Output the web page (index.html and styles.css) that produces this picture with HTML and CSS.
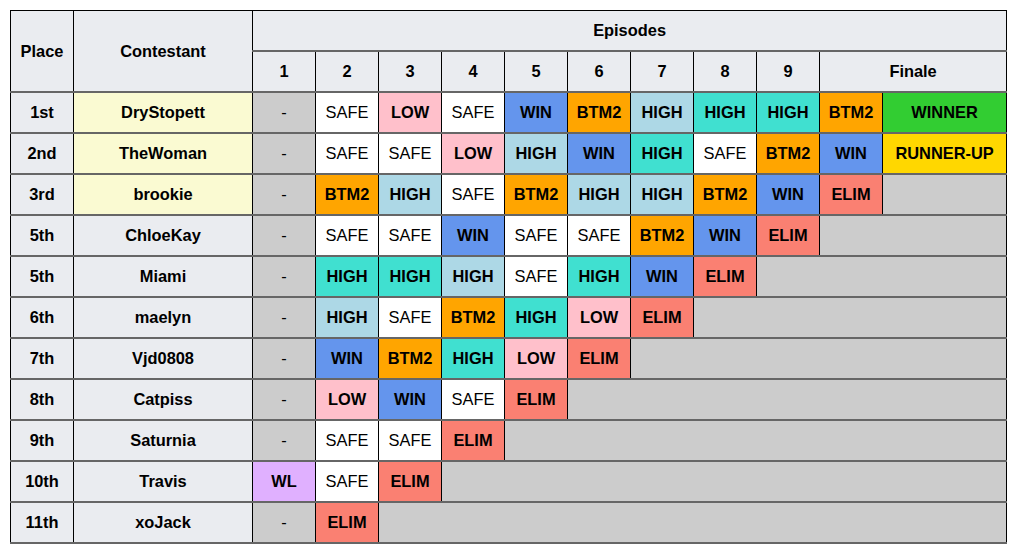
FILE: index.html
```html
<!DOCTYPE html>
<html>
<head>
<meta charset="utf-8">
<link rel="stylesheet" href="styles.css">
</head>
<body>
<table class="results">
  <colgroup>
    <col class="c-place"><col class="c-name">
    <col class="c-ep"><col class="c-ep"><col class="c-ep"><col class="c-ep"><col class="c-ep">
    <col class="c-ep"><col class="c-ep"><col class="c-ep"><col class="c-ep"><col class="c-ep">
    <col class="c-fin">
  </colgroup>
  <thead>
    <tr>
      <th rowspan="2">Place</th>
      <th rowspan="2">Contestant</th>
      <th colspan="11">Episodes</th>
    </tr>
    <tr>
      <th>1</th><th>2</th><th>3</th><th>4</th><th>5</th><th>6</th><th>7</th><th>8</th><th>9</th>
      <th colspan="2">Finale</th>
    </tr>
  </thead>
  <tbody>
    <tr>
      <th>1st</th><th class="top">DryStopett</th>
      <td class="na">-</td><td class="safe">SAFE</td><td class="low">LOW</td><td class="safe">SAFE</td><td class="win">WIN</td><td class="btm">BTM2</td><td class="high">HIGH</td><td class="high2">HIGH</td><td class="high2">HIGH</td><td class="btm">BTM2</td><td class="winner">WINNER</td>
    </tr>
    <tr>
      <th>2nd</th><th class="top">TheWoman</th>
      <td class="na">-</td><td class="safe">SAFE</td><td class="safe">SAFE</td><td class="low">LOW</td><td class="high">HIGH</td><td class="win">WIN</td><td class="high2">HIGH</td><td class="safe">SAFE</td><td class="btm">BTM2</td><td class="win">WIN</td><td class="runner">RUNNER-UP</td>
    </tr>
    <tr>
      <th>3rd</th><th class="top">brookie</th>
      <td class="na">-</td><td class="btm">BTM2</td><td class="high">HIGH</td><td class="safe">SAFE</td><td class="btm">BTM2</td><td class="high">HIGH</td><td class="high">HIGH</td><td class="btm">BTM2</td><td class="win">WIN</td><td class="elim">ELIM</td><td class="out"></td>
    </tr>
    <tr>
      <th>5th</th><th>ChloeKay</th>
      <td class="na">-</td><td class="safe">SAFE</td><td class="safe">SAFE</td><td class="win">WIN</td><td class="safe">SAFE</td><td class="safe">SAFE</td><td class="btm">BTM2</td><td class="win">WIN</td><td class="elim">ELIM</td><td class="out" colspan="2"></td>
    </tr>
    <tr>
      <th>5th</th><th>Miami</th>
      <td class="na">-</td><td class="high2">HIGH</td><td class="high2">HIGH</td><td class="high">HIGH</td><td class="safe">SAFE</td><td class="high2">HIGH</td><td class="win">WIN</td><td class="elim">ELIM</td><td class="out" colspan="3"></td>
    </tr>
    <tr>
      <th>6th</th><th>maelyn</th>
      <td class="na">-</td><td class="high">HIGH</td><td class="safe">SAFE</td><td class="btm">BTM2</td><td class="high2">HIGH</td><td class="low">LOW</td><td class="elim">ELIM</td><td class="out" colspan="4"></td>
    </tr>
    <tr>
      <th>7th</th><th>Vjd0808</th>
      <td class="na">-</td><td class="win">WIN</td><td class="btm">BTM2</td><td class="high2">HIGH</td><td class="low">LOW</td><td class="elim">ELIM</td><td class="out" colspan="5"></td>
    </tr>
    <tr>
      <th>8th</th><th>Catpiss</th>
      <td class="na">-</td><td class="low">LOW</td><td class="win">WIN</td><td class="safe">SAFE</td><td class="elim">ELIM</td><td class="out" colspan="6"></td>
    </tr>
    <tr>
      <th>9th</th><th>Saturnia</th>
      <td class="na">-</td><td class="safe">SAFE</td><td class="safe">SAFE</td><td class="elim">ELIM</td><td class="out" colspan="7"></td>
    </tr>
    <tr>
      <th>10th</th><th>Travis</th>
      <td class="wl">WL</td><td class="safe">SAFE</td><td class="elim">ELIM</td><td class="out" colspan="8"></td>
    </tr>
    <tr>
      <th>11th</th><th>xoJack</th>
      <td class="na">-</td><td class="elim">ELIM</td><td class="out" colspan="9"></td>
    </tr>
  </tbody>
</table>
</body>
</html>
```

FILE: styles.css
```css
html, body {
  margin: 0;
  padding: 0;
  background: #ffffff;
}

body {
  padding: 10px 0 0 10px;
  font-family: "Liberation Sans", Arial, sans-serif;
  font-size: 16.4px;
  color: #202122;
}

.results {
  border-collapse: collapse;
  table-layout: fixed;
  width: 997px;
  border-top: 1px solid #000;
  border-left: 1px solid #000;
  border-right: 1px solid #000;
}

.c-place { width: 63px; }
.c-name { width: 179px; }
.c-ep { width: 63px; }
.c-fin { width: 124px; }

.results th,
.results td {
  border-left: 1px solid #000;
  border-right: 1px solid #000;
  border-top: 2px solid #666;
  border-bottom: 2px solid #666;
  height: 39px;
  padding: 0;
  text-align: center;
  vertical-align: middle;
  color: #000;
  white-space: nowrap;
}

.results thead tr:first-child th {
  border-top: 1px solid #000;
}

.results th {
  background: #eaecf0;
  font-weight: bold;
}

.results td {
  font-weight: bold;
}

.results th.top { background: #fafad2; }

.results td.na { background: #cccccc; font-weight: normal; }
.results td.out { background: #cccccc; }
.results td.safe { background: #ffffff; font-weight: normal; }
.results td.low { background: #ffc0cb; }
.results td.win { background: #6495ed; }
.results td.btm { background: #ffa500; }
.results td.high { background: #add8e6; }
.results td.high2 { background: #40e0d0; }
.results td.elim { background: #fa8072; }
.results td.winner { background: #32cd32; }
.results td.runner { background: #ffd700; }
.results td.wl { background: #e0b0ff; }
```
